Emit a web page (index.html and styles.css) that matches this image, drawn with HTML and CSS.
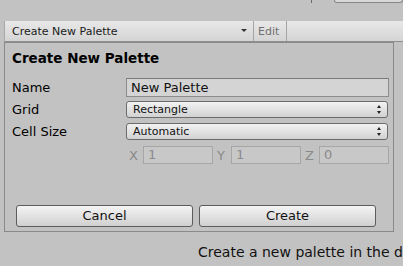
FILE: index.html
```html
<!DOCTYPE html>
<html>
<head>
<meta charset="utf-8">
<link rel="stylesheet" href="styles.css">
</head>
<body>
<div class="top">
  <span class="tick"></span>
  <span class="frag"></span>
</div>
<div class="toolbar">
  <div class="tb-drop"><span>Create New Palette</span><span class="tb-arrow"></span></div>
  <div class="tb-edit">Edit</div>
</div>
<div class="panel">
  <div class="title">Create New Palette</div>
  <div class="row row-name">
    <div class="label">Name</div>
    <div class="input">New Palette</div>
  </div>
  <div class="row row-grid">
    <div class="label">Grid</div>
    <div class="select"><span>Rectangle</span><span class="updown"></span></div>
  </div>
  <div class="row row-cell">
    <div class="label">Cell Size</div>
    <div class="select"><span>Automatic</span><span class="updown"></span></div>
  </div>
  <div class="xyz">
    <span class="axis">X</span><span class="num">1</span>
    <span class="axis">Y</span><span class="num">1</span>
    <span class="axis">Z</span><span class="num">0</span>
  </div>
  <div class="buttons">
    <div class="btn">Cancel</div>
    <div class="btn">Create</div>
  </div>
</div>
<div class="hint">Create a new palette in the desired folder.</div>
</body>
</html>
```
FILE: styles.css
```css
html, body {
  margin: 0;
  padding: 0;
  background: #c2c2c2;
  width: 403px;
  height: 266px;
  overflow: hidden;
  font-family: "DejaVu Sans", sans-serif;
  color: #000;
}
.top {
  height: 21px;
  display: flex;
  align-items: flex-start;
}
.tick {
  width: 1px;
  height: 3px;
  background: #6a6a6a;
  margin-left: 311px;
}
.frag {
  margin-left: 22px;
  width: 80px;
  height: 2px;
  border: 1px solid #888;
  border-top: none;
  border-radius: 0 0 3px 3px;
  background: #d8d8d8;
}
.toolbar {
  margin-left: 4px;
  height: 20px;
  display: flex;
  border-left: 1px solid #a8a8a8;
  border-bottom: 1px solid #8e8e8e;
  background: linear-gradient(#e8e8e8, #d4d4d4);
  font-size: 11px;
}
.tb-drop {
  width: 249px;
  display: flex;
  align-items: center;
  justify-content: space-between;
  padding-left: 7px;
  padding-right: 6px;
  box-sizing: border-box;
  border-right: 1px solid #a4a4a4;
  color: #1a1a1a;
}
.tb-arrow {
  width: 0;
  height: 0;
  border-left: 3px solid transparent;
  border-right: 3px solid transparent;
  border-top: 3px solid #333;
  margin-top: -2px;
}
.tb-edit {
  width: 33px;
  display: flex;
  align-items: center;
  padding-left: 4px;
  box-sizing: border-box;
  border-right: 1px solid #a4a4a4;
  color: #707070;
}
.panel {
  margin-left: 4px;
  width: 390px;
  height: 190px;
  box-sizing: border-box;
  border: 1px solid #8a8a8a;
  padding: 7px 0 0 7px;
  font-size: 13px;
}
.title {
  font-weight: bold;
  font-size: 13.5px;
  line-height: 16px;
  height: 16px;
}
.row {
  display: flex;
  align-items: center;
}
.label {
  width: 114px;
  flex: none;
}
.row-name {
  margin-top: 12px;
  height: 19px;
}
.input {
  width: 263px;
  height: 19px;
  box-sizing: border-box;
  border: 1px solid #8c8c8c;
  border-top-color: #7a7a7a;
  background: #d4d4d4;
  padding-left: 4px;
  line-height: 17px;
  color: #111;
}
.row-grid {
  margin-top: 4px;
  height: 17px;
}
.row-cell {
  margin-top: 5px;
  height: 17px;
}
.select {
  width: 262px;
  height: 17px;
  box-sizing: border-box;
  border: 1px solid #6c6c6c;
  border-radius: 3px;
  background: linear-gradient(#f2f2f2, #d2d2d2);
  font-size: 11px;
  display: flex;
  align-items: center;
  justify-content: space-between;
  padding: 0 5px 0 6px;
  color: #111;
}
.updown {
  width: 5px;
  height: 9px;
  position: relative;
}
.updown::before, .updown::after {
  content: "";
  position: absolute;
  left: 0;
  border-left: 2.5px solid transparent;
  border-right: 2.5px solid transparent;
}
.updown::before {
  top: 0;
  border-bottom: 3px solid #222;
}
.updown::after {
  bottom: 0;
  border-top: 3px solid #222;
}
.xyz {
  margin-top: 6px;
  margin-left: 117px;
  height: 18px;
  display: flex;
  align-items: center;
  color: #8a8a8a;
}
.axis {
  width: 14px;
  flex: none;
}
.num {
  width: 70px;
  height: 18px;
  box-sizing: border-box;
  border: 1px solid #a6a6a6;
  background: #c8c8c8;
  padding-left: 4px;
  line-height: 16px;
  margin-right: 4px;
}
.num:last-child {
  margin-right: 0;
}
.buttons {
  margin-top: 41px;
  margin-left: 4px;
  display: flex;
  gap: 6px;
}
.btn {
  width: 177px;
  height: 22px;
  box-sizing: border-box;
  border: 1px solid #5c5c5c;
  border-radius: 3px;
  background: linear-gradient(#f4f4f4, #d0d0d0);
  text-align: center;
  line-height: 20px;
  color: #111;
}
.hint {
  margin-top: 12px;
  margin-left: 198px;
  font-size: 14px;
  white-space: nowrap;
  color: #111;
}
```
